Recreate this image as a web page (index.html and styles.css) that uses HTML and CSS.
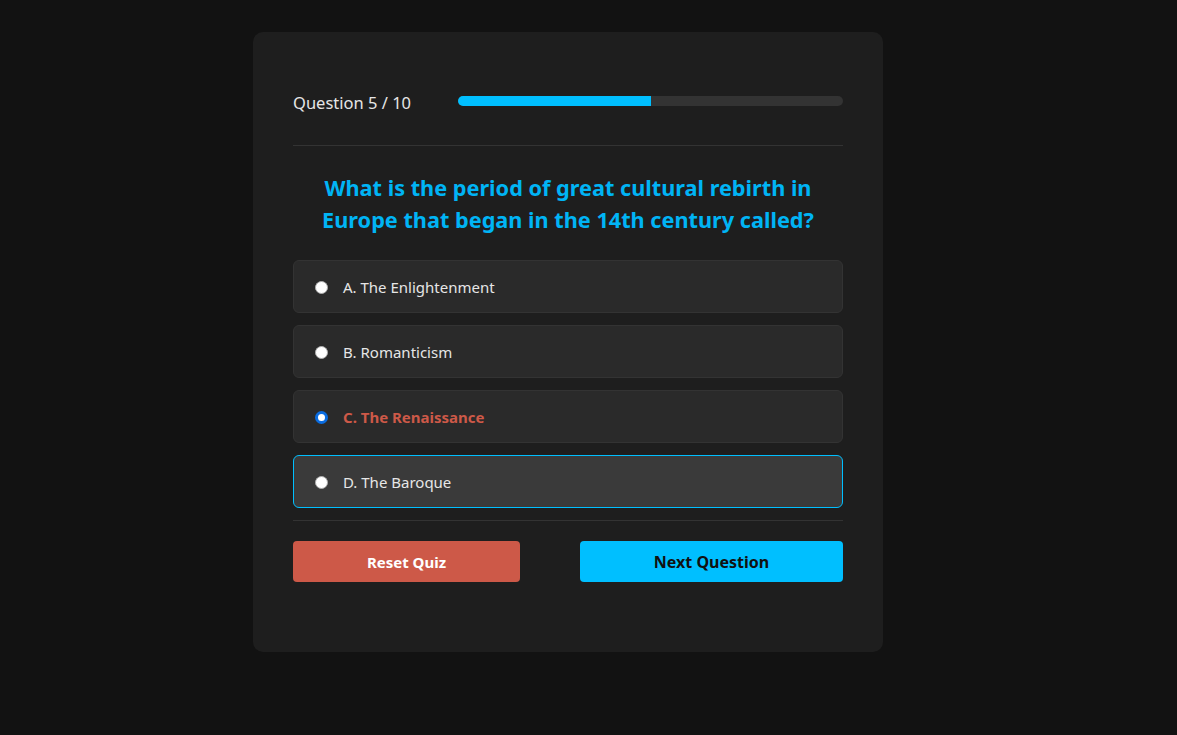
FILE: index.html
```html
<!DOCTYPE html>
<html lang="en">
<head>
<meta charset="utf-8">
<title>Quiz</title>
<link rel="stylesheet" href="styles.css">
</head>
<body>
<div class="page">
  <main class="card">
    <header class="quiz-header">
      <span class="counter">Question 5 / 10</span>
      <div class="progress"><div class="progress-fill" style="width: 50%"></div></div>
    </header>
    <h1 class="question">What is the period of great cultural rebirth in Europe that began in the 14th century called?</h1>
    <ul class="options">
      <li class="option"><span class="radio"></span><span class="label">A. The Enlightenment</span></li>
      <li class="option"><span class="radio"></span><span class="label">B. Romanticism</span></li>
      <li class="option selected"><span class="radio checked"></span><span class="label">C. The Renaissance</span></li>
      <li class="option hover"><span class="radio"></span><span class="label">D. The Baroque</span></li>
    </ul>
    <footer class="actions">
      <button class="btn btn-reset">Reset Quiz</button>
      <button class="btn btn-next">Next Question</button>
    </footer>
  </main>
</div>
</body>
</html>
```
FILE: styles.css
```css
html, body {
  margin: 0;
  padding: 0;
  background: #121212;
  height: 100%;
}
body {
  font-family: "Noto Sans", "Open Sans", sans-serif;
  color: #e0e0e0;
}
.page {
  padding: 32px 0 0 253px;
}
.card {
  width: 630px;
  box-sizing: border-box;
  background: #1e1e1e;
  border-radius: 10px;
  padding: 60px 40px 70px;
}
.quiz-header {
  display: flex;
  align-items: center;
  justify-content: space-between;
  height: 20px;
  padding-bottom: 33px;
  border-bottom: 1px solid #333;
}
.counter {
  font-size: 16.5px;
  color: #e6e6e6;
  padding-top: 1px;
}
.progress {
  width: 385px;
  height: 10px;
  background: #333;
  border-radius: 5px;
  overflow: hidden;
  margin-top: -2px;
}
.progress-fill {
  height: 100%;
  background: #00bfff;
}
.question {
  margin: 26px 0 24px;
  text-align: center;
  font-size: 21.7px;
  line-height: 32px;
  font-weight: 700;
  color: #00b4f5;
}
.options {
  list-style: none;
  margin: 0;
  padding: 0 0 12px;
  border-bottom: 1px solid #333;
  display: flex;
  flex-direction: column;
  gap: 12px;
}
.option {
  display: flex;
  align-items: center;
  height: 53px;
  box-sizing: border-box;
  padding: 1px 21px 0;
  background: #2a2a2a;
  border: 1px solid #333;
  border-radius: 6px;
  font-size: 15px;
  color: #e6e6e6;
}
.option.hover {
  background: #3a3a3a;
  border-color: #00bfff;
}
.option.selected .label {
  color: #cd5948;
  font-weight: 700;
}
.radio {
  width: 13px;
  height: 13px;
  box-sizing: border-box;
  border-radius: 50%;
  background: #fff;
  border: 1px solid #b0b0b0;
  margin-right: 15px;
  flex: none;
}
.radio.checked {
  border: 3px solid #0a6ce0;
  background: #fff;
}
.actions {
  display: flex;
  gap: 60px;
  padding-top: 20px;
}
.btn {
  height: 41px;
  border: none;
  border-radius: 4px;
  font-family: "Noto Sans", "Open Sans", sans-serif;
  font-size: 15px;
  font-weight: 700;
  cursor: pointer;
}
.btn-reset {
  flex: 0 0 227px;
  background: #cd5948;
  color: #fff;
}
.btn-next {
  flex: 1;
  background: #00bfff;
  color: #111;
  font-size: 16px;
}
```
